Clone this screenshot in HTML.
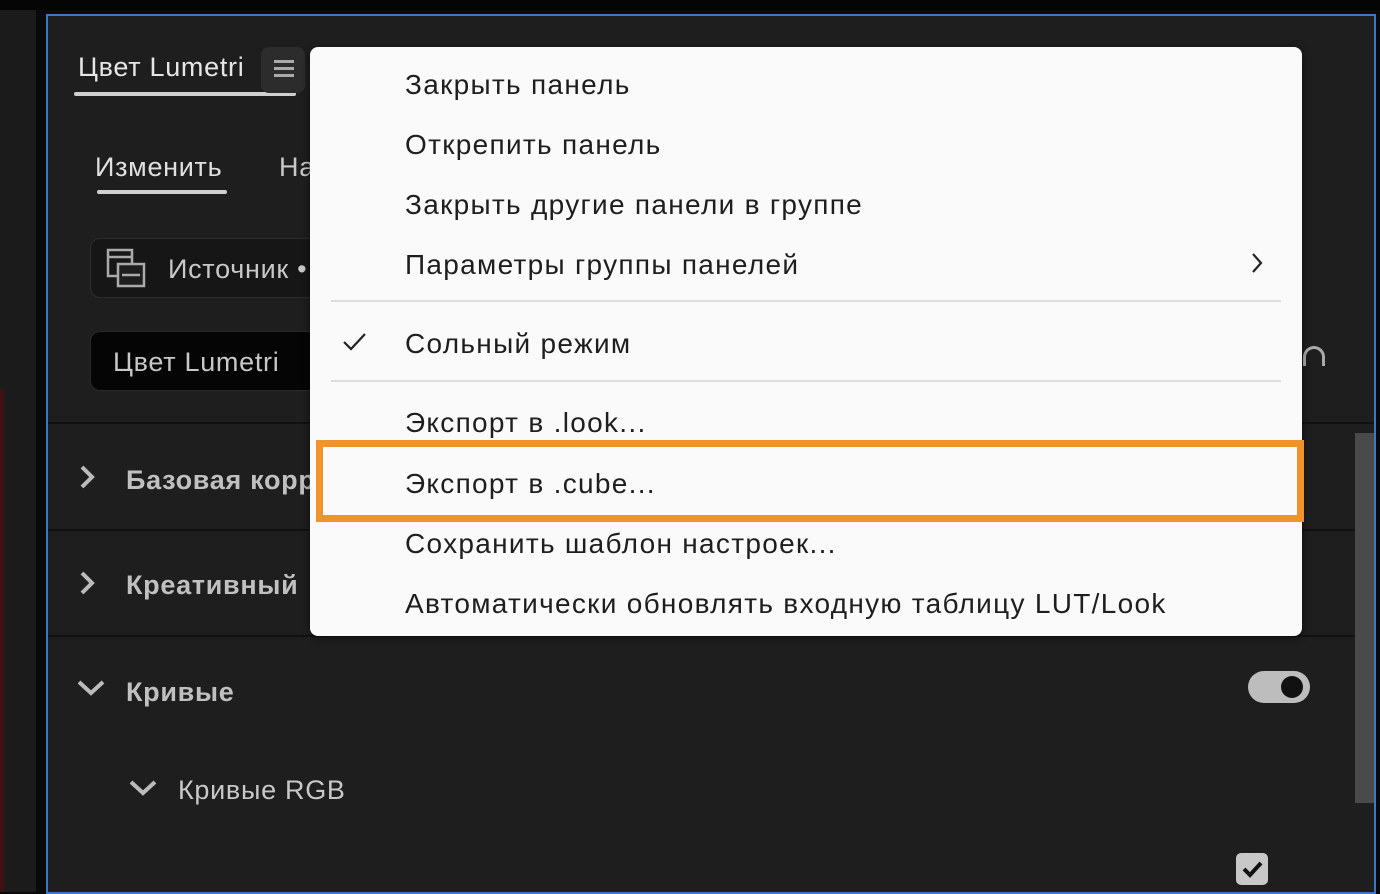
<!DOCTYPE html>
<html><head><meta charset="utf-8"><style>
*{margin:0;padding:0;box-sizing:border-box}
body{width:1380px;height:892px;background:#0a0a0a;position:relative;overflow:hidden;font-family:"Liberation Sans","DejaVu Sans",sans-serif}
.a{position:absolute}
.t{position:absolute;color:#c8c8c8;font-size:27px;white-space:nowrap;line-height:1;letter-spacing:0.7px}
.m{position:absolute;left:95px;color:#1e1e1e;font-size:28px;white-space:nowrap;line-height:1;letter-spacing:1.3px}
.sep{position:absolute;left:0;width:1328px;height:2px;background:#111}
</style></head><body>
<div class="a" style="left:0;top:0;width:1380px;height:10px;background:#050505"></div>
<div class="a" style="left:0;top:10px;width:36px;height:882px;background:#1b1b1b"></div>
<div class="a" style="left:0;top:390px;width:4px;height:502px;background:#3e1212"></div>
<div class="a" style="left:46px;top:14px;width:1330px;height:880px;border:2px solid #3d78c4;background:#1e1e1e"></div>
<div class="a" style="left:48px;top:16px;width:1326px;height:876px;overflow:hidden">
  <div class="t" style="left:30px;top:38px;color:#e6e6e6">Цвет Lumetri</div>
  <div class="a" style="left:26px;top:76px;width:222px;height:4px;background:#d0d0d0;border-radius:2px"></div>
  <div class="a" style="left:213px;top:31px;width:44px;height:46px;background:#2c2c2c;border-radius:8px"></div>
  <div class="a" style="left:226px;top:44px;width:20px;height:3px;background:#aaa;box-shadow:0 7px 0 #aaa,0 14px 0 #aaa"></div>
  <div class="t" style="left:47px;top:138px;color:#e0e0e0">Изменить</div>
  <div class="a" style="left:49px;top:174px;width:130px;height:4px;background:#d0d0d0;border-radius:2px"></div>
  <div class="t" style="left:231px;top:138px">На</div>
  <div class="a" style="left:42px;top:222px;width:260px;height:60px;background:#161616;border:1px solid #2e2e2e;border-radius:10px"></div>
  <svg class="a" style="left:58px;top:232px" width="42" height="42" viewBox="0 0 42 42" fill="none" stroke="#aaa" stroke-width="2.5"><rect x="2" y="2" width="24" height="26"/><rect x="12" y="16" width="26" height="22" fill="#1e1e1e"/><path d="M16 27h18M2 9h24"/></svg>
  <div class="t" style="left:120px;top:240px">Источник •</div>
  <div class="a" style="left:42px;top:315px;width:260px;height:60px;background:#050505;border:1px solid #2a2a2a;border-radius:10px"></div>
  <div class="t" style="left:65px;top:333px">Цвет Lumetri</div>
  <div class="a" style="left:1255px;top:330px;width:22px;height:20px;border:3px solid #aaa;border-bottom:none;border-radius:11px 11px 0 0"></div>
  <div class="sep" style="top:406px"></div>
  <div class="sep" style="top:513px"></div>
  <div class="sep" style="top:619px"></div>
  <svg class="a" style="left:30px;top:448px" width="20" height="26"><path d="M4 3l10 10-10 10" stroke="#bbb" stroke-width="4" fill="none"/></svg>
  <div class="t" style="left:78px;top:451px;font-weight:bold;color:#c0c0c0">Базовая корр</div>
  <svg class="a" style="left:30px;top:554px" width="20" height="26"><path d="M4 3l10 10-10 10" stroke="#bbb" stroke-width="4" fill="none"/></svg>
  <div class="t" style="left:78px;top:556px;font-weight:bold;color:#c0c0c0">Креативный</div>
  <svg class="a" style="left:28px;top:662px" width="30" height="20"><path d="M3 4l12 11 12-11" stroke="#bbb" stroke-width="4" fill="none"/></svg>
  <div class="t" style="left:78px;top:663px;font-weight:bold;color:#c0c0c0">Кривые</div>
  <svg class="a" style="left:80px;top:762px" width="30" height="20"><path d="M3 4l12 11 12-11" stroke="#bbb" stroke-width="4" fill="none"/></svg>
  <div class="t" style="left:130px;top:761px">Кривые RGB</div>
  <div class="a" style="left:1200px;top:655px;width:62px;height:32px;background:#bdbdbd;border-radius:16px"></div>
  <div class="a" style="left:1233px;top:660px;width:22px;height:22px;background:#111;border-radius:50%"></div>
  <div class="a" style="left:1307px;top:417px;width:19px;height:370px;background:#4a4a4a"></div>
  <div class="a" style="left:1188px;top:837px;width:32px;height:32px;background:#c8c8c8;border-radius:5px"></div>
  <svg class="a" style="left:1188px;top:837px" width="32" height="32"><path d="M8 16l6 6 11-12" stroke="#111" stroke-width="4" fill="none"/></svg>
</div>
<div class="a" style="left:310px;top:47px;width:992px;height:589px;background:#fafafa;border-radius:8px;box-shadow:0 2px 8px rgba(0,0,0,.5)">
  <div class="m" style="top:24px">Закрыть панель</div>
  <div class="m" style="top:84px">Открепить панель</div>
  <div class="m" style="top:144px">Закрыть другие панели в группе</div>
  <div class="m" style="top:204px">Параметры группы панелей</div>
  <svg class="a" style="left:940px;top:205px" width="14" height="22"><path d="M3 2l8 9-8 9" stroke="#222" stroke-width="2.2" fill="none"/></svg>
  <div class="a" style="left:21px;top:253px;width:950px;height:2px;background:#dcdcdc"></div>
  <svg class="a" style="left:32px;top:284px" width="26" height="22"><path d="M2 11l7 7 14-15" stroke="#222" stroke-width="2.2" fill="none"/></svg>
  <div class="m" style="top:283px">Сольный режим</div>
  <div class="a" style="left:21px;top:333px;width:950px;height:2px;background:#dcdcdc"></div>
  <div class="m" style="top:362px">Экспорт в .look...</div>
  <div class="m" style="top:423px">Экспорт в .cube...</div>
  <div class="m" style="top:483px">Сохранить шаблон настроек...</div>
  <div class="m" style="top:543px">Автоматически обновлять входную таблицу LUT/Look</div>
</div>
<div class="a" style="left:316px;top:440px;width:988px;height:82px;border:7px solid #f0932a"></div>
</body></html>
